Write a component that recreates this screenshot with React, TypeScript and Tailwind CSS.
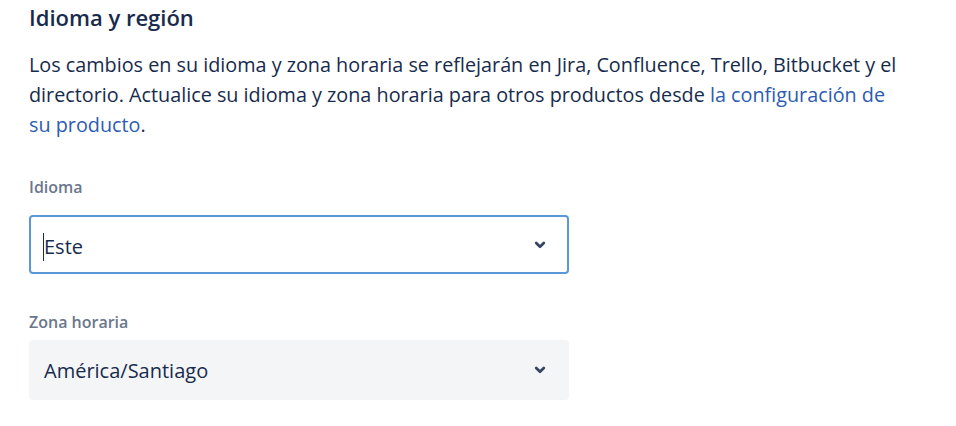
import * as React from 'react'

function Chevron() {
  return (
    <svg width="14" height="14" viewBox="0 0 14 14" className="text-[#344563]">
      <path d="M3.2 5 L7 8.8 L10.8 5" fill="none" stroke="currentColor" strokeWidth="2.7" strokeLinecap="round" strokeLinejoin="round" />
    </svg>
  )
}

export default function App() {
  return (
    <div className="w-[956px] h-[426px] bg-white overflow-hidden font-['Open_Sans',sans-serif] text-[#172b4d]">
      <div className="pl-[29px] pt-[1px]">
        <h2 className="text-[22px] font-semibold leading-[32px]">Idioma y región</h2>

        <p className="mt-[17px] w-[880px] text-[19.8px] leading-[30px]">
          Los cambios en su idioma y zona horaria se reflejarán en Jira, Confluence, Trello, Bitbucket y el
          directorio. Actualice su idioma y zona horaria para otros productos desde{' '}
          <a href="#" className="text-[#2d5cb0]">la configuración de</a>{' '}
          <a href="#" className="text-[#2d5cb0]">su producto</a>.
        </p>

        <div className="mt-[37px]">
          <label className="block text-[16px] font-semibold leading-[20px] text-[#6b778c]">Idioma</label>
          <div className="mt-[18px] w-[540px] h-[59px] rounded-[4px] border-2 border-[#5b97d9] bg-white flex items-center justify-between pl-[12px] pr-[20px]">
            <div className="flex items-center text-[20px] pt-[4px]">
              <span className="w-px h-[28px] bg-[#172b4d]" />
              <span>Este</span>
            </div>
            <Chevron />
          </div>
        </div>

        <div className="mt-[38px]">
          <label className="block text-[16px] font-semibold leading-[20px] text-[#6b778c]">Zona horaria</label>
          <div className="mt-[8px] w-[540px] h-[60px] rounded-[4px] bg-[#f4f5f7] flex items-center justify-between pl-[15px] pr-[22px]">
            <span className="text-[20px] pt-[2px]">América/Santiago</span>
            <Chevron />
          </div>
        </div>
      </div>
    </div>
  )
}
